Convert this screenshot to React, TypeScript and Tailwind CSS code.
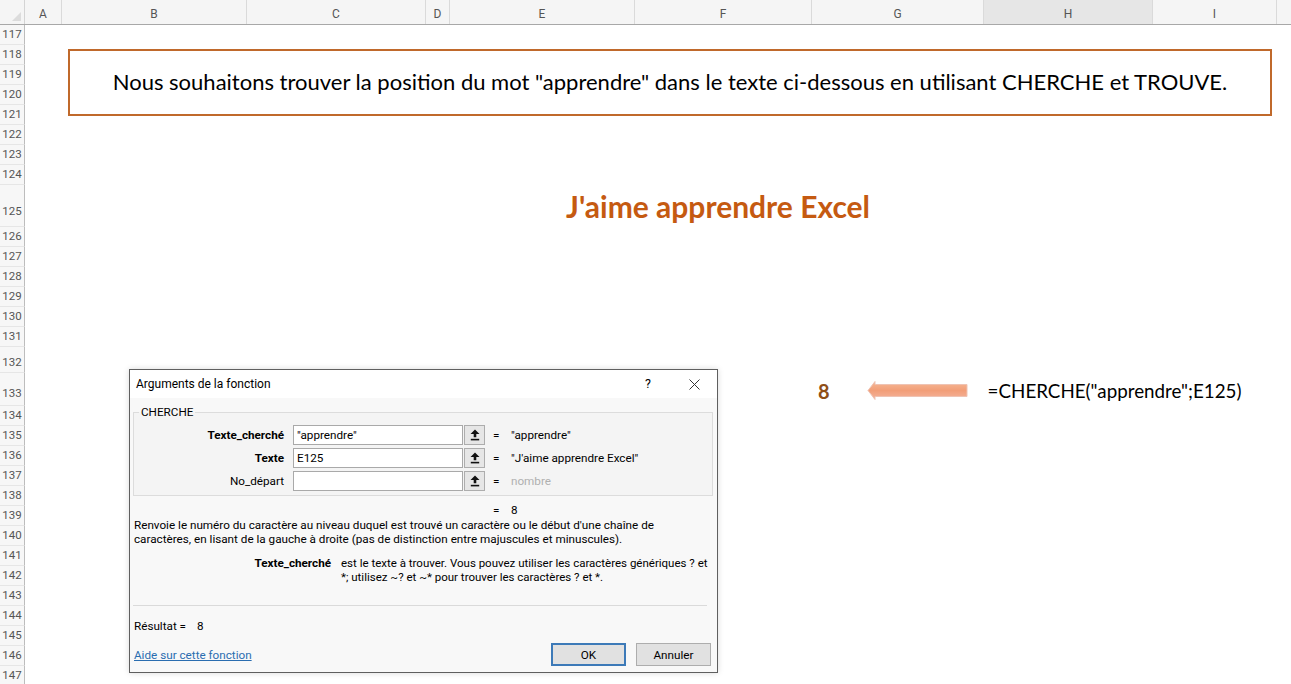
import React from "react";

type Row = { n: number; h: string; pb: string; content?: React.ReactNode };

const sheetFont = { fontFamily: "Lato, 'Liberation Sans', sans-serif" };
const uiFont = { fontFamily: "Roboto, 'Liberation Sans', sans-serif" };

function UploadIcon() {
  return (
    <svg width="10" height="12" viewBox="0 0 10 12">
      <polygon points="5,0.5 9.5,5 6.3,5 6.3,8.3 3.7,8.3 3.7,5 0.5,5" fill="#111" />
      <rect x="0.8" y="9.8" width="8.4" height="1.6" fill="#111" />
    </svg>
  );
}

function Field({ label, bold, value, result, gray }: { label: string; bold?: boolean; value: string; result: string; gray?: boolean }) {
  return (
    <div className="flex h-[20px] items-center">
      <div className={`w-[150px] text-right ${bold ? "font-bold" : ""}`}>{label}</div>
      <div className="ml-[9px] flex h-[20px] w-[170px] items-center border border-[#a9a9a9] bg-white pl-[3px]">{value}</div>
      <div className="ml-[1px] flex h-[20px] w-[21px] items-center justify-center border border-[#adadad] bg-[#e6e6e6]">
        <UploadIcon />
      </div>
      <div className="ml-[8px] w-[8px]">=</div>
      <div className={`ml-[10px] ${gray ? "text-[#b0b0b0]" : ""}`}>{result}</div>
    </div>
  );
}

function Dialog() {
  return (
    <div
      className="absolute left-[129px] top-[369px] flex h-[304px] w-[589px] flex-col overflow-hidden border border-[#5f5f5f] bg-[#f8f8f8] text-[11.7px] leading-[14px] text-black shadow-[0_0_6px_rgba(0,0,0,0.15)]"
      style={uiFont}
    >
      <div className="flex h-[28px] shrink-0 items-center bg-white pl-[6px] text-[12px]">
        <span>Arguments de la fonction</span>
        <span className="ml-auto mr-[38px] text-[12.5px]">?</span>
        <svg className="mr-[17px]" width="11" height="11" viewBox="0 0 11 11">
          <path d="M0.5 0.5 L10.5 10.5 M10.5 0.5 L0.5 10.5" stroke="#333" strokeWidth="1" />
        </svg>
      </div>
      <div className="flex flex-1 flex-col pl-[3px] pr-[4px]">
        <fieldset className="mt-[7px] shrink-0 border border-[#dcdcdc] bg-[#f4f4f4] px-0 pb-[4px] pt-[6px]">
          <legend className="ml-[5px] px-[2px]">CHERCHE</legend>
          <div className="flex flex-col gap-[3px]">
            <Field label="Texte_cherché" bold value={'"apprendre"'} result={'"apprendre"'} />
            <Field label="Texte" bold value="E125" result={'"J\'aime apprendre Excel"'} />
            <Field label="No_départ" value="" result="nombre" gray />
          </div>
        </fieldset>
        <div className="mt-[7px] flex h-[14px] shrink-0 items-center">
          <div className="w-[360px]" />
          <div className="w-[8px]">=</div>
          <div className="ml-[10px]">8</div>
        </div>
        <div className="mt-[1px] whitespace-nowrap pl-[1px]">
          <div>Renvoie le numéro du caractère au niveau duquel est trouvé un caractère ou le début d'une chaîne de</div>
          <div>caractères, en lisant de la gauche à droite (pas de distinction entre majuscules et minuscules).</div>
        </div>
        <div className="mt-[10px] flex whitespace-nowrap">
          <div className="w-[198px] text-right font-bold">Texte_cherché</div>
          <div className="ml-[10px] text-[11.5px]">
            <div>est le texte à trouver. Vous pouvez utiliser les caractères génériques ? et</div>
            <div>*; utilisez ~? et ~* pour trouver les caractères ? et *.</div>
          </div>
        </div>
        <div className="mr-[6px] mt-[21px] border-t border-[#dadada]" />
        <div className="mt-[13px] flex pl-[1px]">
          <span>Résultat =</span>
          <span className="ml-[11px]">8</span>
        </div>
        <div className="mt-[10px] flex items-center pl-[1px]">
          <span className="text-[#2a6db0] underline">Aide sur cette fonction</span>
          <div className="ml-auto flex h-[23px] w-[75px] items-center justify-center border-2 border-[#3d7ab8] bg-[#e1e1e1]">OK</div>
          <div className="ml-[10px] mr-[2px] flex h-[23px] w-[75px] items-center justify-center border border-[#adadad] bg-[#e1e1e1]">Annuler</div>
        </div>
      </div>
    </div>
  );
}

function Arrow() {
  return (
    <svg className="absolute left-[866px] top-[380px]" width="103" height="21" viewBox="0 0 103 21">
      <defs>
        <linearGradient id="ag" x1="0" y1="0" x2="0" y2="1">
          <stop offset="0" stopColor="#f6b996" />
          <stop offset="0.5" stopColor="#f29e78" />
          <stop offset="1" stopColor="#f4b49c" />
        </linearGradient>
      </defs>
      <polygon
        points="2,10.5 9,1.5 9,4.5 101,4.5 101,16.5 9,16.5 9,19.5"
        fill="url(#ag)"
        stroke="#efc3b3"
        strokeWidth="1"
      />
    </svg>
  );
}

const cols: { l: string; w: string; sel?: boolean }[] = [
  { l: "A", w: "w-[37px]" },
  { l: "B", w: "w-[185px]" },
  { l: "C", w: "w-[179px]" },
  { l: "D", w: "w-[24px]" },
  { l: "E", w: "w-[185px]" },
  { l: "F", w: "w-[177px]" },
  { l: "G", w: "w-[172px]" },
  { l: "H", w: "w-[169px]", sel: true },
  { l: "I", w: "w-[124px]" },
];

export default function App() {
  const rows: Row[] = [];
  for (let n = 117; n <= 124; n++) rows.push({ n, h: "h-[20px]", pb: "pb-[3px]" });
  rows.push({
    n: 125,
    h: "h-[42px]",
    pb: "pb-[8px]",
    content: (
      <div className="flex h-full items-center pl-[541px]">
        <span className="text-[30px] font-bold text-[#c55a11]" style={sheetFont}>
          J'aime apprendre Excel
        </span>
      </div>
    ),
  });
  for (let n = 126; n <= 131; n++) rows.push({ n, h: "h-[20px]", pb: "pb-[3px]" });
  rows.push({ n: 132, h: "h-[26px]", pb: "pb-[3px]" });
  rows.push({
    n: 133,
    h: "h-[33px]",
    pb: "pb-[5px]",
    content: (
      <div className="flex h-full items-center pt-[3px]" style={sheetFont}>
        <span className="ml-[793px] text-[20px] font-bold text-[#8f4f16]">8</span>
        <span className="ml-[158px] text-[18.8px] text-black">=CHERCHE("apprendre";E125)</span>
      </div>
    ),
  });
  for (let n = 134; n <= 147; n++) rows.push({ n, h: "h-[20px]", pb: "pb-[3px]" });

  return (
    <div className="relative h-[684px] w-[1291px] overflow-hidden bg-white">
      {/* column header */}
      <div className="flex h-[25px] border-b border-[#a8a8a8] bg-[#f5f5f5] text-[12px] text-[#555]" style={uiFont}>
        <div className="relative w-[25px] border-r border-[#d4d4d4]">
          <div className="absolute bottom-[3px] right-[3px] h-0 w-0 border-b-[9px] border-l-[9px] border-b-[#dcdcdc] border-l-transparent" />
        </div>
        {cols.map((c) => (
          <div
            key={c.l}
            className={`${c.w} flex items-center justify-center border-r border-[#dadada] pt-[3px] ${c.sel ? "bg-[#e6e6e6]" : ""}`}
          >
            {c.l}
          </div>
        ))}
        <div className="flex-1" />
      </div>
      {/* rows */}
      <div className="flex flex-col">
        {rows.map((r) => (
          <div key={r.n} className={`flex ${r.h}`}>
            <div
              className={`flex w-[25px] shrink-0 items-end justify-center border-b border-r border-b-[#e6e6e6] border-r-[#bdbdbd] bg-[#f7f7f7] text-[11.5px] leading-[14px] text-[#555] ${r.pb}`}
              style={uiFont}
            >
              {r.n}
            </div>
            <div className="flex-1">{r.content}</div>
          </div>
        ))}
      </div>

      {/* text box shape */}
      <div
        className="absolute left-[68px] top-[49px] flex h-[67px] w-[1204px] items-center justify-center border-2 border-[#c0692b] bg-white pb-[3px] text-[22px] text-black"
        style={sheetFont}
      >
        Nous souhaitons trouver la position du mot "apprendre" dans le texte ci-dessous en utilisant CHERCHE et TROUVE.
      </div>

      <Arrow />
      <Dialog />
    </div>
  );
}
